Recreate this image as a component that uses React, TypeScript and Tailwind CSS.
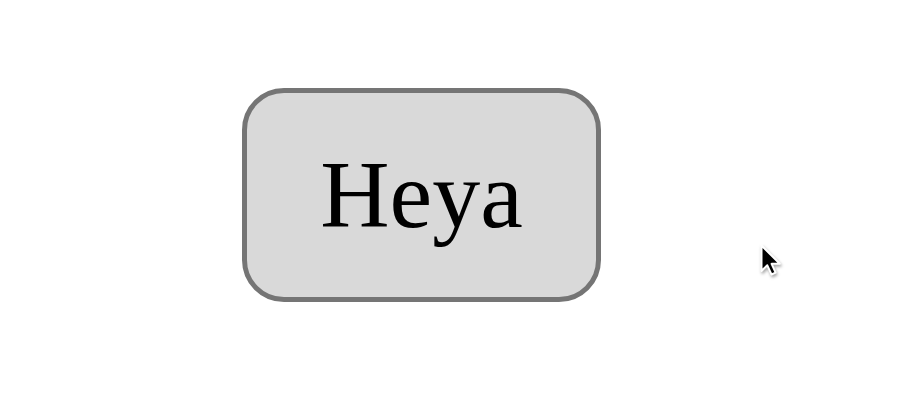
const Cursor = () => (
  <svg
    className="absolute left-[757px] top-[241px]"
    width="28"
    height="42"
    viewBox="0 0 28 42"
  >
    <path
      d="M4.5 4.5 L4.5 30 L10.3 24.3 L14.5 33.5 L18.6 31.7 L14.6 22.8 L22.8 22.8 Z"
      fill="#000"
      stroke="#fff"
      strokeWidth="2"
      strokeLinejoin="round"
      style={{ filter: "drop-shadow(1px 2px 1.5px rgba(0,0,0,0.35))" }}
    />
  </svg>
);

export default function App() {
  return (
    <div className="relative w-[914px] h-[400px] bg-white pt-[88px] pl-[242px]">
      <div className="flex items-center justify-center w-[359px] h-[214px] rounded-[42px] border-[5px] border-[#757575] bg-[#d9d9d9]">
        <span className="text-[96px] leading-none text-black font-['Liberation_Serif',serif]">
          Heya
        </span>
      </div>
      <Cursor />
    </div>
  );
}
